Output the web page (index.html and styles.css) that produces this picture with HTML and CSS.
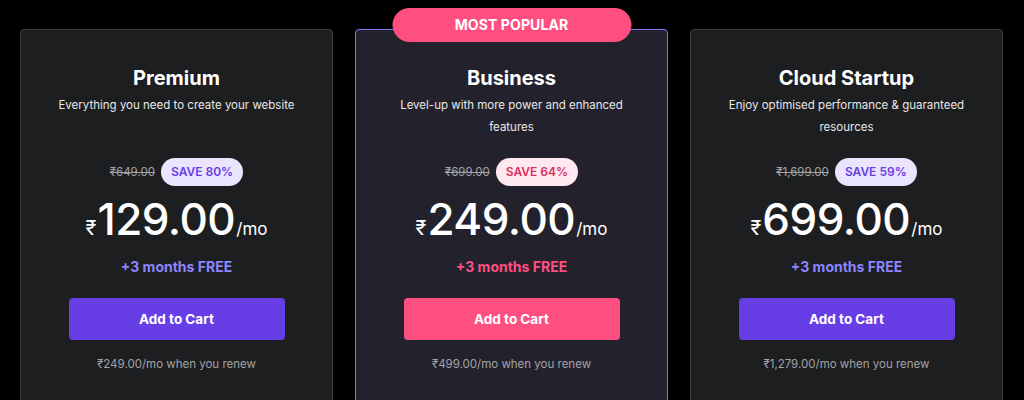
FILE: index.html
```html
<!DOCTYPE html>
<html lang="en">
<head>
  <meta charset="UTF-8">
  <meta name="viewport" content="width=device-width,initial-scale=1">
  <title>Pricing</title>
  <link rel="stylesheet" href="styles.css">
</head>
<body>
<div class="plans">
  <div class="plan">
    <h2 class="plan-title">Premium</h2>
    <p class="plan-desc">Everything you need to create your website</p>
    <div class="price-old-row">
      <span class="price-old">₹649.00</span>
      <span class="save">SAVE 80%</span>
    </div>
    <div class="price">
      <span class="currency">₹</span><span class="amount">129.00</span><span class="per">/mo</span>
    </div>
    <div class="bonus">+3 months FREE</div>
    <a href="javascript:" class="button">Add to Cart</a>
    <div class="renew">₹249.00/mo when you renew</div>
  </div>

  <div class="plan plan-popular">
    <div class="ribbon">MOST POPULAR</div>
    <h2 class="plan-title">Business</h2>
    <p class="plan-desc">Level-up with more power and enhanced features</p>
    <div class="price-old-row">
      <span class="price-old">₹699.00</span>
      <span class="save">SAVE 64%</span>
    </div>
    <div class="price">
      <span class="currency">₹</span><span class="amount">249.00</span><span class="per">/mo</span>
    </div>
    <div class="bonus">+3 months FREE</div>
    <a href="javascript:" class="button">Add to Cart</a>
    <div class="renew">₹499.00/mo when you renew</div>
  </div>

  <div class="plan">
    <h2 class="plan-title">Cloud Startup</h2>
    <p class="plan-desc">Enjoy optimised performance &amp; guaranteed resources</p>
    <div class="price-old-row">
      <span class="price-old">₹1,699.00</span>
      <span class="save">SAVE 59%</span>
    </div>
    <div class="price">
      <span class="currency">₹</span><span class="amount">699.00</span><span class="per">/mo</span>
    </div>
    <div class="bonus">+3 months FREE</div>
    <a href="javascript:" class="button">Add to Cart</a>
    <div class="renew">₹1,279.00/mo when you renew</div>
  </div>
</div>
</body>
</html>
```

FILE: styles.css
```css
* {
  margin: 0;
  padding: 0;
  box-sizing: border-box;
}

html, body {
  height: 100%;
}

body {
  background-color: #000;
  font-family: Inter, "Noto Sans", "DejaVu Sans", sans-serif;
  color: #fff;
  overflow: hidden;
}

.plans {
  display: flex;
  gap: 22px;
  height: 100vh;
  padding: 29px 21px 0 20px;
  overflow: hidden;
}

.plan {
  position: relative;
  flex: 1;
  display: flex;
  flex-direction: column;
  align-items: center;
  height: 390px;
  padding: 34px 24px 0;

  background-color: #1d1e20;
  border: 1px solid #3d3e44;
  border-radius: 4px;
  text-align: center;
}

.plan-popular {
  background-color: #23222c;
  border-color: #7d76f0;
}

.ribbon {
  position: absolute;
  top: -22px;
  left: 50%;
  transform: translateX(-50%);
  width: 239px;
  height: 34px;
  line-height: 34px;

  background-color: #ff4f81;
  border-radius: 17px;
  font-size: 14px;
  font-weight: 700;
  letter-spacing: 0.1px;
}

.plan-title {
  font-size: 20px;
  line-height: 28px;
  font-weight: 700;
}

.plan-desc {
  height: 44px;
  margin-top: 2px;
  font-size: 11.5px;
  line-height: 22px;
  color: #e8e8ea;
}

.price-old-row {
  display: flex;
  align-items: center;
  gap: 6px;
  margin-top: 20px;
}

.price-old {
  font-size: 11.5px;
  color: #a3a3a8;
  text-decoration: line-through;
}

.save {
  height: 28px;
  padding: 0 10px;
  line-height: 28px;

  background-color: #ebe4ff;
  border-radius: 14px;
  font-size: 12px;
  font-weight: 600;
  color: #673de6;
}

.plan-popular .save {
  background-color: #ffe8ef;
  color: #d63163;
}

.price {
  display: flex;
  align-items: baseline;
  margin-top: 6px;
  height: 54px;
}

.currency {
  font-size: 20px;
  margin-right: 1px;
}

.amount {
  font-size: 44px;
  font-weight: 500;
  letter-spacing: -0.5px;
}

.per {
  font-size: 17px;
  margin-left: 1px;
}

.bonus {
  margin-top: 11px;
  font-size: 14px;
  line-height: 20px;
  font-weight: 700;
  color: #8c85ff;
}

.plan-popular .bonus {
  color: #ff4f81;
}

.button {
  display: flex;
  justify-content: center;
  align-items: center;
  width: 216px;
  height: 42px;
  margin-top: 21px;

  background-color: #673de6;
  border-radius: 4px;
  font-size: 13.5px;
  font-weight: 700;
  color: #fff;
  text-decoration: none;
}

.plan-popular .button {
  background-color: #ff4f81;
}

.renew {
  margin-top: 16px;
  font-size: 11.5px;
  line-height: 16px;
  color: #a3a3a8;
}
```
